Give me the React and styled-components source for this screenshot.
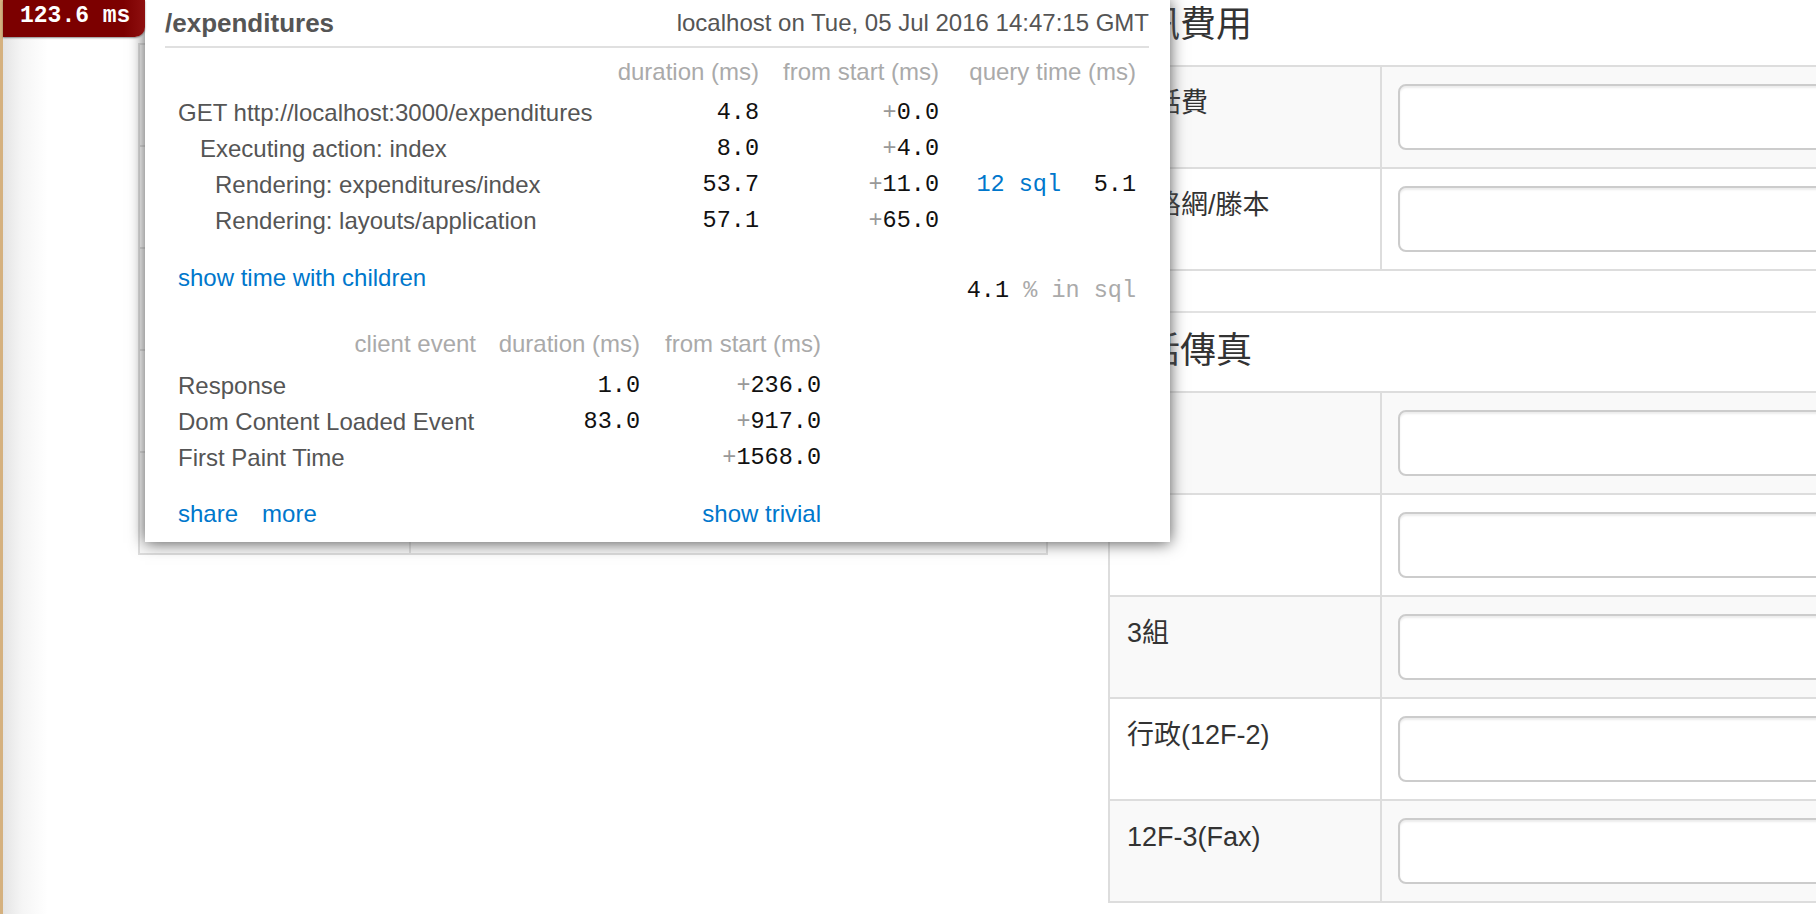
import React from 'react';
import styled, { createGlobalStyle } from 'styled-components';

const GlobalStyle = createGlobalStyle`
  html, body {
    margin: 0;
    padding: 0;
  }
  body {
    width: 1816px;
    height: 914px;
    overflow: hidden;
    font-family: "Liberation Sans", "Noto Sans CJK TC", sans-serif;
    color: #333;
    background: linear-gradient(to right, #d5b17f 0, #d5b17f 3px, #e4e4e4 3px, #f5f5f5 22px, #ffffff 48px);
  }
`;

const Page = styled.div`
  position: relative;
  display: flex;
  height: 914px;
  padding-left: 138px;
  box-sizing: border-box;
  overflow: hidden;
`;

const LeftColumn = styled.div`
  flex-shrink: 0;
  width: 910px;
  padding-top: 43px;
`;

const RightColumn = styled.div`
  flex-shrink: 0;
  width: 900px;
  margin-left: 60px;
`;

const SectionTitle = styled.h3`
  margin: 0;
  padding: ${p => (p.$first ? '0' : '13px')} 0 15px;
  font-size: 36px;
  line-height: 50px;
  font-weight: 400;
  color: #333;
`;

const Divider = styled.hr`
  margin: 40px 0 0;
  border: none;
  border-top: 2px solid #e2e2e2;
`;

const Table = styled.div`
  border: 2px solid #dddddd;
  border-top: none;
`;

const Row = styled.div`
  display: grid;
  grid-template-columns: ${p => p.$labelWidth}px 1fr;
  height: 102px;
  box-sizing: border-box;
  border-top: 2px solid #dddddd;
  background: ${p => (p.$striped ? '#f9f9f9' : '#ffffff')};
`;

const LabelCell = styled.div`
  padding: 17px 17px;
  font-size: 27px;
  line-height: 38px;
  color: #333;
`;

const ValueCell = styled.div`
  padding: 17px 16px;
  border-left: 2px solid #dddddd;
`;

const TextInput = styled.input`
  display: block;
  width: 100%;
  height: 66px;
  box-sizing: border-box;
  border: 2px solid #cccccc;
  border-radius: 8px;
  background: #fff;
  box-shadow: inset 0 2px 2px rgba(0, 0, 0, 0.075);
`;

/* profiler overlay */

const Badge = styled.div`
  position: absolute;
  top: 0;
  left: 3px;
  width: 142px;
  height: 37px;
  box-sizing: border-box;
  padding-left: 17px;
  background: linear-gradient(to right, #7c0000 0, #7c0000 85%, #8e1010 100%);
  border-bottom-right-radius: 10px;
  box-shadow: 0 1px 2px rgba(0, 0, 0, 0.45);
  font-family: "Liberation Mono", monospace;
  font-weight: bold;
  font-size: 23px;
  line-height: 33px;
  color: #fff;
  z-index: 3;
`;

const Popup = styled.div`
  position: absolute;
  top: 0;
  left: 145px;
  width: 1025px;
  box-sizing: border-box;
  padding: 0 21px 10px 20px;
  background: #fff;
  box-shadow: 0 1px 15px #555;
  color: #555;
  font-size: 24px;
  z-index: 2;
`;

const PopupHeader = styled.div`
  display: flex;
  justify-content: space-between;
  align-items: center;
  height: 46px;
  border-bottom: 2px solid #e0e0e0;
`;

const RequestName = styled.h1`
  margin: 0;
  font-size: 26px;
  font-weight: bold;
  color: #555;
`;

const Stamp = styled.span`
  font-size: 24px;
  color: #555;
`;

const Timings = styled.div`
  margin-top: 6px;
  padding: 0 13px;
`;

const TimingRow = styled.div`
  display: grid;
  grid-template-columns: 1fr 159px 180px 122px 75px;
  height: 36px;
  line-height: 36px;
  margin-bottom: ${p => (p.$head ? '5px' : '0')};
`;

const ClientRow = styled.div`
  display: grid;
  grid-template-columns: 298px 164px 181px;
  height: 36px;
  line-height: 36px;
  margin-bottom: ${p => (p.$head ? '6px' : '0')};
`;

const HeadCell = styled.div`
  color: #aaa;
  text-align: right;
  white-space: nowrap;
  grid-column: ${p => p.$span || 'auto'};
`;

const NameCell = styled.div`
  padding-left: ${p => p.$indent || 0}px;
  color: #555;
  white-space: nowrap;
`;

const NumCell = styled.div`
  font-family: "Liberation Mono", monospace;
  font-size: 23.5px;
  color: #111;
  text-align: right;
  white-space: nowrap;
`;

const Plus = styled.span`
  color: #999;
`;

const Muted = styled.span`
  color: #aaa;
`;

const Link = styled.a`
  color: #0077cc;
  text-decoration: none;
  cursor: pointer;
`;

const SqlLink = styled(Link)`
  font-family: "Liberation Mono", monospace;
  font-size: 23.5px;
`;

const SummaryRow = styled.div`
  display: flex;
  justify-content: space-between;
  align-items: flex-start;
  margin-top: 21px;
  padding: 0 13px;
  line-height: 36px;
`;

const SqlShare = styled.div`
  margin-top: 13px;
  margin-bottom: -3px;
  font-family: "Liberation Mono", monospace;
  font-size: 23.5px;
  color: #111;
`;

const ClientTable = styled.div`
  margin-top: 20px;
  padding: 0 13px;
`;

const LinkGroup = styled.div`
  display: flex;
  gap: 24px;
`;

const FooterRow = styled(ClientRow)`
  margin-top: 20px;
`;

const TrivialCell = styled.div`
  grid-column: 2 / 4;
  text-align: right;
`;

const timings = [
  { name: 'GET http://localhost:3000/expenditures', indent: 0, duration: '4.8', start: '0.0' },
  { name: 'Executing action: index', indent: 22, duration: '8.0', start: '4.0' },
  { name: 'Rendering: expenditures/index', indent: 37, duration: '53.7', start: '11.0', sql: '12 sql', query: '5.1' },
  { name: 'Rendering: layouts/application', indent: 37, duration: '57.1', start: '65.0' },
];

const clientEvents = [
  { name: 'Response', duration: '1.0', start: '236.0' },
  { name: 'Dom Content Loaded Event', duration: '83.0', start: '917.0' },
  { name: 'First Paint Time', duration: '', start: '1568.0' },
];

const commRows = ['電話費', '網路網/滕本'];
const phoneRows = ['', '', '3組', '行政(12F-2)', '12F-3(Fax)'];

const Profiler = () => (
  <>
    <Badge>123.6 ms</Badge>
    <Popup>
      <PopupHeader>
        <RequestName>/expenditures</RequestName>
        <Stamp>localhost on Tue, 05 Jul 2016 14:47:15 GMT</Stamp>
      </PopupHeader>

      <Timings>
        <TimingRow $head>
          <div />
          <HeadCell>duration (ms)</HeadCell>
          <HeadCell>from start (ms)</HeadCell>
          <HeadCell $span="4 / 6">query time (ms)</HeadCell>
        </TimingRow>
        {timings.map(t => (
          <TimingRow key={t.name}>
            <NameCell $indent={t.indent}>{t.name}</NameCell>
            <NumCell>{t.duration}</NumCell>
            <NumCell><Plus>+</Plus>{t.start}</NumCell>
            <NumCell>{t.sql && <SqlLink>{t.sql}</SqlLink>}</NumCell>
            <NumCell>{t.query}</NumCell>
          </TimingRow>
        ))}
      </Timings>

      <SummaryRow>
        <Link>show time with children</Link>
        <SqlShare>4.1 <Muted>% in sql</Muted></SqlShare>
      </SummaryRow>

      <ClientTable>
        <ClientRow $head>
          <HeadCell>client event</HeadCell>
          <HeadCell>duration (ms)</HeadCell>
          <HeadCell>from start (ms)</HeadCell>
        </ClientRow>
        {clientEvents.map(e => (
          <ClientRow key={e.name}>
            <NameCell>{e.name}</NameCell>
            <NumCell>{e.duration}</NumCell>
            <NumCell><Plus>+</Plus>{e.start}</NumCell>
          </ClientRow>
        ))}
        <FooterRow>
          <LinkGroup>
            <Link>share</Link>
            <Link>more</Link>
          </LinkGroup>
          <TrivialCell>
            <Link>show trivial</Link>
          </TrivialCell>
        </FooterRow>
      </ClientTable>
    </Popup>
  </>
);

const App = () => (
  <>
    <GlobalStyle />
    <Page>
      <LeftColumn>
        <Table>
          {[0, 1, 2, 3, 4].map(i => (
            <Row key={i} $labelWidth={269} $striped={i % 2 === 0}>
              <LabelCell />
              <ValueCell />
            </Row>
          ))}
        </Table>
      </LeftColumn>

      <RightColumn>
        <SectionTitle $first>通訊費用</SectionTitle>
        <Table>
          {commRows.map((label, i) => (
            <Row key={label} $labelWidth={270} $striped={i % 2 === 0}>
              <LabelCell>{label}</LabelCell>
              <ValueCell>
                <TextInput type="text" />
              </ValueCell>
            </Row>
          ))}
        </Table>
        <Divider />
        <SectionTitle>電話傳真</SectionTitle>
        <Table>
          {phoneRows.map((label, i) => (
            <Row key={i} $labelWidth={270} $striped={i % 2 === 0}>
              <LabelCell>{label}</LabelCell>
              <ValueCell>
                <TextInput type="text" />
              </ValueCell>
            </Row>
          ))}
        </Table>
      </RightColumn>

      <Profiler />
    </Page>
  </>
);

export default App;
